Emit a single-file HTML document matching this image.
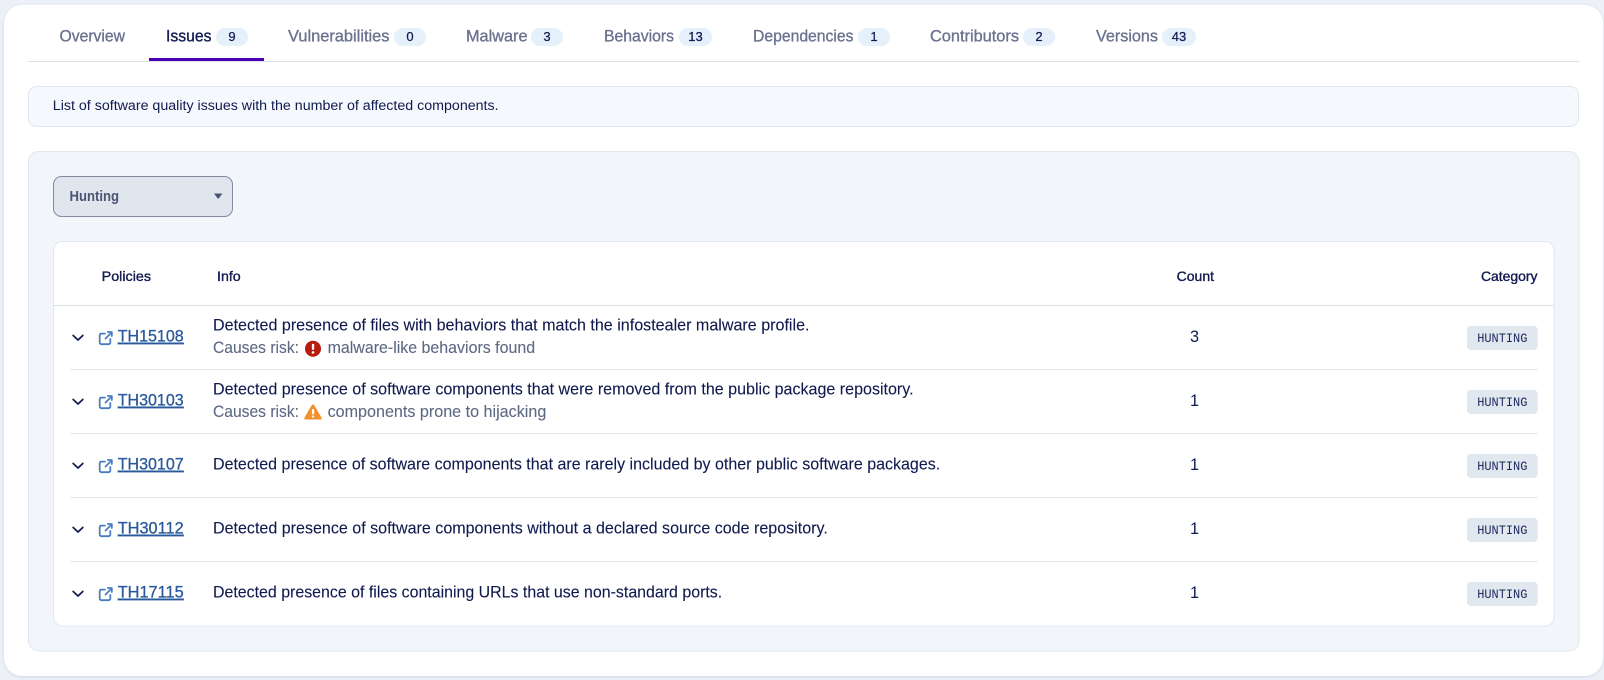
<!DOCTYPE html>
<html lang="en">
<head>
<meta charset="utf-8">
<title>Issues</title>
<style>
html,body{margin:0;padding:0;background:#edf0f7;width:1604px;height:680px;overflow:hidden}
svg{display:block}
text{font-family:"Liberation Sans",Arial,sans-serif;white-space:pre}
.tab{font-size:16.4px;fill:#6b7390;stroke:#6b7390;stroke-width:.35px}
.act{fill:#121c54;stroke:#121c54}
.num{font-size:13px;fill:#121c54;stroke:#121c54;stroke-width:.25px;text-anchor:middle}
.th{font-size:13.6px;fill:#101a4e;stroke:#101a4e;stroke-width:.35px}
.d{font-size:16.3px;fill:#101a4e;stroke:#101a4e;stroke-width:.1px}
.r{font-size:16.3px;fill:#5c6884;stroke:#5c6884;stroke-width:.1px}
.l{font-size:16.4px;fill:#27599c;stroke:#27599c;stroke-width:.3px;text-decoration:underline}
.m{font-family:"Liberation Mono",monospace;font-size:13px;fill:#1c2a5e}
.c{font-size:16.3px;fill:#101a4e;text-anchor:middle}
.b{fill:#e6f0fa}
.div{stroke:#e3e7ee;stroke-width:1}
.chev{fill:none;stroke:#141c50;stroke-width:1.8;stroke-linecap:round;stroke-linejoin:round}
.ext{fill:none;stroke:#4a7ec0;stroke-width:1.8;stroke-linecap:round;stroke-linejoin:round}
</style>
</head>
<body>
<svg width="1604" height="680" viewBox="0 0 1604 680" xmlns="http://www.w3.org/2000/svg">
<defs>
<filter id="s" x="-2%" y="-2%" width="104%" height="104%"><feDropShadow dx="0" dy="1" stdDeviation="1.5" flood-color="#c9d0e4" flood-opacity=".8"/></filter>
</defs>
<rect x="4" y="5" width="1599" height="671" rx="18" fill="#fff" filter="url(#s)"/>

<!-- tabs -->
<line x1="28" y1="61.5" x2="1579" y2="61.5" stroke="#d9dfe9" stroke-width="1"/>
<rect x="149" y="58" width="115" height="3" fill="#4a00b4"/>
<text class="tab" x="59.5" y="41.7" textLength="65.5" lengthAdjust="spacingAndGlyphs">Overview</text>
<text class="tab act" x="166" y="41.7" textLength="45.5" lengthAdjust="spacingAndGlyphs">Issues</text>
<rect class="b" x="216" y="28" width="32" height="18" rx="9"/><text class="num" x="232" y="41.2">9</text>
<text class="tab" x="288" y="41.7" textLength="101.5" lengthAdjust="spacingAndGlyphs">Vulnerabilities</text>
<rect class="b" x="394" y="28" width="32" height="18" rx="9"/><text class="num" x="410" y="41.2">0</text>
<text class="tab" x="466" y="41.7" textLength="61.5" lengthAdjust="spacingAndGlyphs">Malware</text>
<rect class="b" x="531" y="28" width="32" height="18" rx="9"/><text class="num" x="547" y="41.2">3</text>
<text class="tab" x="604" y="41.7" textLength="70" lengthAdjust="spacingAndGlyphs">Behaviors</text>
<rect class="b" x="679" y="28" width="33" height="18" rx="9"/><text class="num" x="695.5" y="41.2">13</text>
<text class="tab" x="753" y="41.7" textLength="100.5" lengthAdjust="spacingAndGlyphs">Dependencies</text>
<rect class="b" x="858" y="28" width="32" height="18" rx="9"/><text class="num" x="874" y="41.2">1</text>
<text class="tab" x="930" y="41.7" textLength="89" lengthAdjust="spacingAndGlyphs">Contributors</text>
<rect class="b" x="1023" y="28" width="32" height="18" rx="9"/><text class="num" x="1039" y="41.2">2</text>
<text class="tab" x="1096" y="41.7" textLength="62" lengthAdjust="spacingAndGlyphs">Versions</text>
<rect class="b" x="1162" y="28" width="34" height="18" rx="9"/><text class="num" x="1179" y="41.2">43</text>

<!-- info box -->
<rect x="28.5" y="86.5" width="1550" height="40" rx="8" fill="#f5f8fd" stroke="#e1e7ef"/>
<text x="52.8" y="110" font-size="14.2" fill="#101a4e" textLength="445.8" lengthAdjust="spacingAndGlyphs">List of software quality issues with the number of affected components.</text>

<!-- panel -->
<rect x="28.5" y="151.5" width="1550.5" height="499.5" rx="10" fill="#f2f5fa" stroke="#e1e7ef"/>

<!-- select -->
<rect x="53.5" y="176.5" width="179" height="40" rx="8" fill="#e0e6ed" stroke="#858a9e"/>
<text x="69.5" y="201" font-size="14.4" font-weight="700" fill="#4c5473" textLength="49.5" lengthAdjust="spacingAndGlyphs">Hunting</text>
<path d="M214 193.5h8.4l-3.4 4.6q-.8.8-1.6 0z" fill="#4c5473"/>

<!-- table -->
<rect x="53.5" y="241.5" width="1500.5" height="384.5" rx="9" fill="#fff" stroke="#e1e7ef"/>
<text class="th" x="101.7" y="281" textLength="49.3" lengthAdjust="spacingAndGlyphs">Policies</text>
<text class="th" x="217" y="281" textLength="23.7" lengthAdjust="spacingAndGlyphs">Info</text>
<text class="th" x="1176.7" y="281" textLength="37.3" lengthAdjust="spacingAndGlyphs">Count</text>
<text class="th" x="1481" y="281" textLength="56.5" lengthAdjust="spacingAndGlyphs">Category</text>
<line x1="54" y1="305.5" x2="1554" y2="305.5" stroke="#dcdfe5"/>
<line class="div" x1="70" y1="369.5" x2="1537.5" y2="369.5"/>
<line class="div" x1="70" y1="433.5" x2="1537.5" y2="433.5"/>
<line class="div" x1="70" y1="497.5" x2="1537.5" y2="497.5"/>
<line class="div" x1="70" y1="561.5" x2="1537.5" y2="561.5"/>

<!-- row 1 -->
<path class="chev" d="M73.2 335.5l4.8 4.5 4.8-4.5"/>
<g transform="translate(0,-0.6)"><path class="ext" d="M105 334.2h-3.7a1.6 1.6 0 0 0-1.6 1.6v7.4a1.6 1.6 0 0 0 1.6 1.6h7.4a1.6 1.6 0 0 0 1.6-1.6v-3.6M105.5 339.2l6.2-6.4M107.8 332.6h4v4"/></g>
<text class="l" x="117.7" y="341.6" textLength="66" lengthAdjust="spacingAndGlyphs">TH15108</text>
<text class="d" x="213" y="330.6" textLength="596.5" lengthAdjust="spacingAndGlyphs">Detected presence of files with behaviors that match the infostealer malware profile.</text>
<text class="r" x="213" y="352.8" textLength="86" lengthAdjust="spacingAndGlyphs">Causes risk:</text>
<circle cx="313" cy="348.7" r="8" fill="#b81c11"/>
<rect x="311.9" y="343.7" width="2.3" height="6.2" rx="1" fill="#fff"/><circle cx="313" cy="352.4" r="1.3" fill="#fff"/>
<text class="r" x="327.6" y="352.8" textLength="207.5" lengthAdjust="spacingAndGlyphs">malware-like behaviors found</text>
<text class="c" x="1194.5" y="342">3</text>
<rect x="1467" y="326" width="70.7" height="24" rx="4" fill="#e1e7ee"/>
<text class="m" x="1477.2" y="342" textLength="50.2" lengthAdjust="spacingAndGlyphs">HUNTING</text>

<!-- row 2 -->
<path class="chev" d="M73.2 399.5l4.8 4.5 4.8-4.5"/>
<g transform="translate(0,63.4)"><path class="ext" d="M105 334.2h-3.7a1.6 1.6 0 0 0-1.6 1.6v7.4a1.6 1.6 0 0 0 1.6 1.6h7.4a1.6 1.6 0 0 0 1.6-1.6v-3.6M105.5 339.2l6.2-6.4M107.8 332.6h4v4"/></g>
<text class="l" x="117.7" y="405.6" textLength="66" lengthAdjust="spacingAndGlyphs">TH30103</text>
<text class="d" x="213" y="394.6" textLength="700.6" lengthAdjust="spacingAndGlyphs">Detected presence of software components that were removed from the public package repository.</text>
<text class="r" x="213" y="416.8" textLength="86" lengthAdjust="spacingAndGlyphs">Causes risk:</text>
<path d="M313 404.5q.9 0 1.4.9l7.2 12.4q.7 1.5-.9 1.7h-15.4q-1.6-.2-.9-1.7l7.2-12.4q.5-.9 1.4-.9z" fill="#f29030"/>
<rect x="311.9" y="409" width="2.3" height="5.4" rx="1" fill="#fff"/><circle cx="313" cy="416.6" r="1.2" fill="#fff"/>
<text class="r" x="327.6" y="416.8" textLength="218.7" lengthAdjust="spacingAndGlyphs">components prone to hijacking</text>
<text class="c" x="1194.5" y="406">1</text>
<rect x="1467" y="390" width="70.7" height="24" rx="4" fill="#e1e7ee"/>
<text class="m" x="1477.2" y="406" textLength="50.2" lengthAdjust="spacingAndGlyphs">HUNTING</text>

<!-- row 3 -->
<path class="chev" d="M73.2 463.5l4.8 4.5 4.8-4.5"/>
<g transform="translate(0,127.4)"><path class="ext" d="M105 334.2h-3.7a1.6 1.6 0 0 0-1.6 1.6v7.4a1.6 1.6 0 0 0 1.6 1.6h7.4a1.6 1.6 0 0 0 1.6-1.6v-3.6M105.5 339.2l6.2-6.4M107.8 332.6h4v4"/></g>
<text class="l" x="117.7" y="469.6" textLength="66" lengthAdjust="spacingAndGlyphs">TH30107</text>
<text class="d" x="213" y="469.6" textLength="727.2" lengthAdjust="spacingAndGlyphs">Detected presence of software components that are rarely included by other public software packages.</text>
<text class="c" x="1194.5" y="470">1</text>
<rect x="1467" y="454" width="70.7" height="24" rx="4" fill="#e1e7ee"/>
<text class="m" x="1477.2" y="470" textLength="50.2" lengthAdjust="spacingAndGlyphs">HUNTING</text>

<!-- row 4 -->
<path class="chev" d="M73.2 527.5l4.8 4.5 4.8-4.5"/>
<g transform="translate(0,191.4)"><path class="ext" d="M105 334.2h-3.7a1.6 1.6 0 0 0-1.6 1.6v7.4a1.6 1.6 0 0 0 1.6 1.6h7.4a1.6 1.6 0 0 0 1.6-1.6v-3.6M105.5 339.2l6.2-6.4M107.8 332.6h4v4"/></g>
<text class="l" x="117.7" y="533.6" textLength="66" lengthAdjust="spacingAndGlyphs">TH30112</text>
<text class="d" x="213" y="533.6" textLength="614.8" lengthAdjust="spacingAndGlyphs">Detected presence of software components without a declared source code repository.</text>
<text class="c" x="1194.5" y="534">1</text>
<rect x="1467" y="518" width="70.7" height="24" rx="4" fill="#e1e7ee"/>
<text class="m" x="1477.2" y="534" textLength="50.2" lengthAdjust="spacingAndGlyphs">HUNTING</text>

<!-- row 5 -->
<path class="chev" d="M73.2 591.5l4.8 4.5 4.8-4.5"/>
<g transform="translate(0,255.4)"><path class="ext" d="M105 334.2h-3.7a1.6 1.6 0 0 0-1.6 1.6v7.4a1.6 1.6 0 0 0 1.6 1.6h7.4a1.6 1.6 0 0 0 1.6-1.6v-3.6M105.5 339.2l6.2-6.4M107.8 332.6h4v4"/></g>
<text class="l" x="117.7" y="597.6" textLength="66" lengthAdjust="spacingAndGlyphs">TH17115</text>
<text class="d" x="213" y="597.6" textLength="509.2" lengthAdjust="spacingAndGlyphs">Detected presence of files containing URLs that use non-standard ports.</text>
<text class="c" x="1194.5" y="598">1</text>
<rect x="1467" y="582" width="70.7" height="24" rx="4" fill="#e1e7ee"/>
<text class="m" x="1477.2" y="598" textLength="50.2" lengthAdjust="spacingAndGlyphs">HUNTING</text>
</svg>
</body>
</html>
